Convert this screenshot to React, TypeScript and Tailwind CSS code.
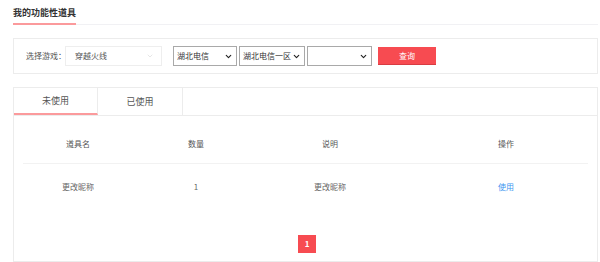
import { ChevronDown } from 'lucide-react'

const font = { fontFamily: '"Noto Sans CJK SC", "Noto Sans", sans-serif' }

function NativeSelect({ label, width }: { label: string; width: string }) {
  return (
    <div className={`flex h-[20px] ${width} items-center justify-between overflow-hidden whitespace-nowrap border border-[#a9a9a9] bg-white pl-[3px] pr-[3px] text-[8px] text-[#333]`}>
      <span>{label}</span>
      <ChevronDown className="h-[9px] w-[9px] shrink-0 text-[#222]" strokeWidth={3} />
    </div>
  )
}

export default function App() {
  const cols = 'grid grid-cols-[110px_126px_142px_189px]'

  return (
    <div className="h-[262px] w-[600px] bg-white pl-[13px] pr-[2px]" style={font}>
      {/* Title */}
      <div className="flex h-[25px] items-end border-b border-[#f1f1f4]">
        <span className="-mb-px border-b-2 border-[#fb9a9c] pb-[4px] text-[9px] font-bold leading-[12px] text-[#333]">
          我的功能性道具
        </span>
      </div>

      {/* Filter */}
      <div className="mt-[13px] flex h-[36px] items-center border border-[#ececec] pl-[12px]">
        <span className="w-[39px] whitespace-nowrap text-[8px] text-[#555]">选择游戏：</span>
        <div className="flex h-[20px] w-[97px] items-center justify-between border border-[#eee] pl-[9px] pr-[7px] text-[8px] text-[#555]">
          <span>穿越火线</span>
          <ChevronDown className="h-[8px] w-[8px] text-[#ccc]" strokeWidth={1.5} />
        </div>
        <div className="ml-[11px] flex items-center gap-[2px]">
          <NativeSelect label="湖北电信" width="w-[64px]" />
          <NativeSelect label="湖北电信一区" width="w-[66px]" />
          <NativeSelect label="" width="w-[65px]" />
        </div>
        <button className="ml-[6px] flex h-[18px] w-[58px] items-center justify-center border-b border-[#d83c42] bg-[#f74b51] text-[8px] text-white">
          查询
        </button>
      </div>

      {/* Tabs + table */}
      <div className="mt-[13px] h-[175px] border border-[#ececec]">
        <div className="flex h-[28px] border-b border-[#ececec] text-[9px] text-[#555]">
          <div className="flex w-[84px] items-center justify-center border-b-2 border-r border-[#ececec] border-b-[#fb9a9c]">
            未使用
          </div>
          <div className="flex w-[85px] items-center justify-center border-r border-[#ececec]">已使用</div>
        </div>

        <div className="px-[9px] text-[8px]">
          <div className={`${cols} mt-[8px] h-[40px] items-center border-b border-[#f2f2f2] text-[#555]`}>
            <span className="text-center">道具名</span>
            <span className="text-center">数量</span>
            <span className="text-center">说明</span>
            <span className="pl-[21px] text-center">操作</span>
          </div>
          <div className={`${cols} h-[46px] items-center text-[#666]`}>
            <span className="text-center">更改昵称</span>
            <span className="text-center">1</span>
            <span className="text-center">更改昵称</span>
            <span className="pl-[21px] text-center text-[#3d95f0]">使用</span>
          </div>
        </div>

        <div className="mt-[25px] flex justify-center">
          <div className="ml-[3px] flex h-[18px] w-[18px] items-center justify-center bg-[#f74b51] text-[8px] font-bold text-white">
            1
          </div>
        </div>
      </div>
    </div>
  )
}
